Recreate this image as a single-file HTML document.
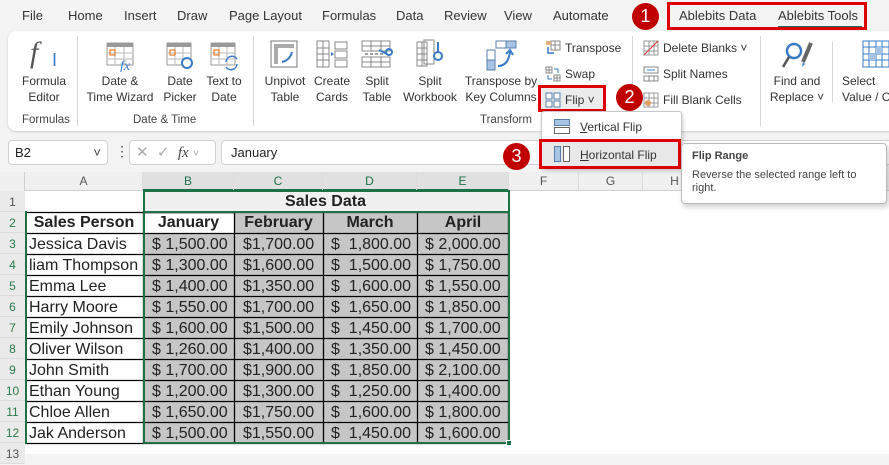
<!DOCTYPE html>
<html><head><meta charset="utf-8"><style>
*{margin:0;padding:0;box-sizing:border-box}
body{width:889px;height:454px;overflow:hidden;background:#f3f3f3;font-family:"Liberation Sans",Arial,sans-serif;position:relative;color:#222}
.a{position:absolute}
.t{font-size:13px;color:#333;top:8px}
.rl{font-size:12px;color:#333;text-align:center;line-height:16px}
.gl{font-size:11.5px;color:#444;top:114px}
.sep{width:1px;background:#d6d6d6}
.sm{font-size:12px;color:#333}
.c{position:absolute;font-size:16px;line-height:21px;height:21px;white-space:nowrap;overflow:hidden}
.ch{position:absolute;top:172px;height:19px;font-size:12px;color:#555;text-align:center;line-height:19px;border-right:1px solid #dcdcdc}
.rh{position:absolute;left:0;width:25px;font-size:12px;color:#2a7a4a;text-align:center;height:21px;line-height:22px;background:#eaeaea;border-bottom:1px solid #dcdcdc}
.circ{position:absolute;width:27px;height:27px;border-radius:50%;background:#c00000;color:#fff;font-size:18px;text-align:center;line-height:27px}
</style></head><body>
<!-- tabs -->
<div class="a t" style="left:22px">File</div>
<div class="a t" style="left:68px">Home</div>
<div class="a t" style="left:124px">Insert</div>
<div class="a t" style="left:177px">Draw</div>
<div class="a t" style="left:229px">Page Layout</div>
<div class="a t" style="left:322px">Formulas</div>
<div class="a t" style="left:396px">Data</div>
<div class="a t" style="left:444px">Review</div>
<div class="a t" style="left:504px">View</div>
<div class="a t" style="left:553px">Automate</div>
<div class="a t" style="left:679px">Ablebits Data</div>
<div class="a t" style="left:778px">Ablebits Tools</div>
<div class="a" style="left:778px;top:26px;width:84px;height:2px;background:#1e7145"></div>
<div class="a" style="left:667px;top:2px;width:200px;height:28px;border:3px solid #d00"></div>
<div class="circ" style="left:632px;top:3px">1</div>
<!-- ribbon -->
<div class="a" style="left:8px;top:31px;width:900px;height:100px;background:#fff;border-radius:8px;box-shadow:0 1px 2px #ccc"></div>
<div class="a sep" style="left:77px;top:36px;height:90px"></div>
<div class="a sep" style="left:253px;top:36px;height:90px"></div>
<div class="a sep" style="left:632px;top:36px;height:90px"></div>
<div class="a sep" style="left:760px;top:36px;height:90px"></div>
<div class="a sep" style="left:832px;top:42px;height:60px"></div>
<!-- icons -->
<div class="a" style="left:30px;top:36px;font-family:'Liberation Serif',serif;font-style:italic;font-size:30px;color:#555">f</div>
<div class="a" style="left:52px;top:50px;font-size:18px;color:#3a7bc8">I</div>
<svg class="a" style="left:106px;top:42px" width="30" height="30"><rect x="1" y="1" width="26" height="22" fill="none" stroke="#999"/><rect x="1" y="1" width="26" height="4" fill="#999"/><path d="M1 11H27M1 17H27M9 5V23M18 5V23" stroke="#bbb"/><rect x="4" y="8" width="5" height="5" fill="none" stroke="#e06000"/><text x="14" y="28" font-size="14" font-style="italic" fill="#3a7bc8" font-family="Liberation Serif">fx</text></svg>
<svg class="a" style="left:166px;top:42px" width="30" height="30"><rect x="1" y="1" width="24" height="22" fill="none" stroke="#999"/><rect x="1" y="1" width="24" height="4" fill="#999"/><path d="M1 11H25M1 17H25M9 5V23M17 5V23" stroke="#bbb"/><rect x="4" y="8" width="5" height="5" fill="none" stroke="#e06000"/><circle cx="21" cy="21" r="5" fill="#fff" stroke="#3a7bc8" stroke-width="2"/></svg>
<svg class="a" style="left:210px;top:42px" width="30" height="30"><rect x="1" y="1" width="24" height="22" fill="none" stroke="#999"/><rect x="1" y="1" width="24" height="4" fill="#999"/><path d="M1 11H25M1 17H25M9 5V23M17 5V23" stroke="#bbb"/><rect x="4" y="8" width="5" height="5" fill="none" stroke="#e06000"/><path d="M16 20a6 6 0 0 1 11 -3M27 22a6 6 0 0 1 -11 3" fill="none" stroke="#3a7bc8" stroke-width="1.5"/></svg>
<svg class="a" style="left:270px;top:40px" width="30" height="30"><rect x="1" y="1" width="26" height="26" fill="none" stroke="#777"/><rect x="4" y="4" width="20" height="4" fill="#aaa"/><rect x="4" y="8" width="4" height="16" fill="#aaa"/><path d="M12 22 Q20 20 22 12" fill="none" stroke="#3a7bc8" stroke-width="2"/></svg>
<svg class="a" style="left:316px;top:40px" width="32" height="30"><path d="M1 1h12v26H1zM1 8h12M1 14h12M1 20h12M7 1v26M19 2h12v7H19zM19 11h12v7H19zM19 20h12v7H19z" fill="none" stroke="#888"/><path d="M15 12l3 2-3 2z" fill="#3a7bc8"/></svg>
<svg class="a" style="left:361px;top:40px" width="32" height="30"><path d="M1 1h28v10H1zM1 6h28M10 1v10M20 1v10M1 17h28v10H1zM1 22h28M10 17v10M20 17v10" fill="none" stroke="#888"/><path d="M4 14h20" stroke="#444" stroke-dasharray="3 2"/><circle cx="28" cy="12" r="3" fill="none" stroke="#3a7bc8" stroke-width="2"/><path d="M18 10l8 4" stroke="#3a7bc8" stroke-width="2"/></svg>
<svg class="a" style="left:416px;top:38px" width="30" height="32"><path d="M1 4h10v24H1zM1 10h10M1 16h10M1 22h10M6 4v24M8 2h10v24H8z" fill="none" stroke="#888"/><path d="M22 4v10" stroke="#3a7bc8" stroke-width="2"/><circle cx="22" cy="18" r="4" fill="none" stroke="#3a7bc8" stroke-width="2"/></svg>
<svg class="a" style="left:486px;top:40px" width="32" height="32"><path d="M10 1h10v7H10zM20 1h10v7H20zM1 10h8v10H1zM1 20h8v10H1z" fill="#fff" stroke="#5a7fa8"/><rect x="20.5" y="1.5" width="9" height="6" fill="#a8c4e4"/><rect x="1.5" y="20.5" width="7" height="9" fill="#a8c4e4"/><path d="M12 26 Q22 26 24 12" fill="none" stroke="#3a7bc8" stroke-width="2"/><path d="M20 14l4-4 3 5" fill="none" stroke="#3a7bc8" stroke-width="2"/></svg>
<svg class="a" style="left:781px;top:40px" width="34" height="34"><circle cx="13" cy="11" r="7" fill="none" stroke="#3a7bc8" stroke-width="2.5"/><path d="M8 17L2 27" stroke="#555" stroke-width="2.5"/><path d="M30 3L22 22" stroke="#666" stroke-width="4"/><path d="M22 22l-1 5 3-3z" fill="#3a7bc8"/></svg>
<svg class="a" style="left:862px;top:40px" width="30" height="30"><path d="M1 1h26v26H1zM1 7h26M1 14h26M1 20h26M7 1v26M14 1v26M20 1v26" fill="#fff" stroke="#3a7bc8"/><rect x="14" y="7" width="6" height="7" fill="#a8c4e4"/><rect x="7" y="14" width="7" height="6" fill="#a8c4e4"/></svg>
<!-- labels -->
<div class="a rl" style="left:14px;top:73px;width:60px">Formula<br>Editor</div>
<div class="a rl" style="left:84px;top:73px;width:72px">Date &amp;<br>Time Wizard</div>
<div class="a rl" style="left:158px;top:73px;width:44px">Date<br>Picker</div>
<div class="a rl" style="left:202px;top:73px;width:44px">Text to<br>Date</div>
<div class="a rl" style="left:259px;top:73px;width:52px">Unpivot<br>Table</div>
<div class="a rl" style="left:309px;top:73px;width:46px">Create<br>Cards</div>
<div class="a rl" style="left:355px;top:73px;width:44px">Split<br>Table</div>
<div class="a rl" style="left:400px;top:73px;width:60px">Split<br>Workbook</div>
<div class="a rl" style="left:462px;top:73px;width:78px">Transpose by<br>Key Columns</div>
<div class="a rl" style="left:765px;top:73px;width:64px">Find and<br>Replace ˅</div>
<div class="a rl" style="left:838px;top:73px;width:70px;text-align:left;padding-left:4px">Select<br>Value / C</div>
<div class="a gl" style="left:22px">Formulas</div>
<div class="a gl" style="left:133px">Date &amp; Time</div>
<div class="a gl" style="left:480px">Transform</div>
<!-- small buttons -->
<svg class="a" style="left:545px;top:40px" width="16" height="16"><path d="M6 1h9v9H6zM6 5h9M10 1v9" fill="none" stroke="#888"/><rect x="1" y="1" width="5" height="4" fill="#e0b080"/><path d="M3 7v6h6" fill="none" stroke="#3a7bc8" stroke-width="1.5"/></svg>
<div class="a sm" style="left:565px;top:41px">Transpose</div>
<svg class="a" style="left:545px;top:66px" width="16" height="16"><path d="M1 1h6v6H1zM9 9h6v6H9zM1 4h6M4 1v6M9 12h6M12 9v6" fill="none" stroke="#888"/><path d="M9 3h4v4M7 13H3V9" fill="none" stroke="#3a7bc8"/></svg>
<div class="a sm" style="left:565px;top:67px">Swap</div>
<div class="a" style="left:538px;top:85px;width:68px;height:27px;border:3px solid #d00;background:#ececec"></div>
<svg class="a" style="left:545px;top:92px" width="16" height="16"><path d="M1 1h6v6H1zM9 1h6v6H9zM1 9h6v6H1zM9 9h6v6H9z" fill="#fff" stroke="#5a7fa8"/></svg>
<div class="a sm" style="left:565px;top:93px">Flip ˅</div>
<div class="circ" style="left:616px;top:84px">2</div>
<svg class="a" style="left:643px;top:40px" width="16" height="16"><path d="M1 1h14v14H1zM1 6h14M1 11h14M6 1v14M11 1v14" fill="none" stroke="#999"/><path d="M1 15L15 1" stroke="#d33"/></svg>
<div class="a sm" style="left:663px;top:41px">Delete Blanks ˅</div>
<svg class="a" style="left:643px;top:66px" width="16" height="16"><path d="M1 1h14v6H1zM1 10h14v5H1zM6 10v5M11 10v5" fill="none" stroke="#888"/><path d="M4 4h8" stroke="#3a7bc8"/></svg>
<div class="a sm" style="left:663px;top:67px">Split Names</div>
<svg class="a" style="left:643px;top:92px" width="16" height="16"><path d="M1 1h14v14H1zM1 6h14M1 11h14M6 1v14M11 1v14" fill="none" stroke="#999"/><circle cx="5" cy="11" r="3" fill="#e0a060"/></svg>
<div class="a sm" style="left:663px;top:93px">Fill Blank Cells</div>
<!-- formula bar -->
<div class="a" style="left:8px;top:140px;width:100px;height:25px;background:#fff;border:1px solid #d0d0d0;border-radius:4px;font-size:13px;line-height:23px;padding-left:6px">B2<span style="position:absolute;right:6px;color:#444">˅</span></div>
<div class="a" style="left:115px;top:143px;font-size:14px;color:#444">⋮</div>
<div class="a" style="left:129px;top:140px;width:87px;height:25px;background:#fff;border:1px solid #d0d0d0;border-radius:4px;font-size:15px;line-height:23px;color:#aaa;padding-left:6px">✕&nbsp;&nbsp;✓&nbsp;&nbsp;<i style="font-family:'Liberation Serif',serif;color:#444">fx</i> <span style="font-size:11px">˅</span></div>
<div class="a" style="left:221px;top:140px;width:680px;height:25px;background:#fff;border:1px solid #d0d0d0;border-radius:4px;font-size:13px;line-height:23px;padding-left:9px">January</div>
<!-- sheet -->
<div class="a" style="left:0;top:172px;width:889px;height:282px;background:#fff"></div>
<div class="a" style="left:0;top:172px;width:889px;height:19px;background:#f0f0f0;border-bottom:1px solid #cfcfcf"></div>
<div class="a" style="left:0;top:172px;width:25px;height:282px;background:#f0f0f0;border-right:1px solid #cfcfcf"></div>
<div class="a" style="left:143px;top:172px;width:366px;height:19px;background:#e0e0e0;border-bottom:2px solid #1e7145"></div>
<div class="ch" style="left:25px;width:118px">A</div>
<div class="ch" style="left:143px;width:91px;color:#1e7145">B</div>
<div class="ch" style="left:234px;width:89px;color:#1e7145">C</div>
<div class="ch" style="left:323px;width:94px;color:#1e7145">D</div>
<div class="ch" style="left:417px;width:92px;color:#1e7145">E</div>
<div class="ch" style="left:509px;width:70px">F</div>
<div class="ch" style="left:579px;width:64px">G</div>
<div class="ch" style="left:643px;width:64px">H</div>
<div class="rh" style="top:191px;color:#555">1</div>
<div class="rh" style="top:212px">2</div><div class="rh" style="top:233px">3</div><div class="rh" style="top:254px">4</div><div class="rh" style="top:275px">5</div><div class="rh" style="top:296px">6</div><div class="rh" style="top:317px">7</div><div class="rh" style="top:338px">8</div><div class="rh" style="top:359px">9</div><div class="rh" style="top:380px">10</div><div class="rh" style="top:401px">11</div><div class="rh" style="top:422px">12</div>
<div class="rh" style="top:443px;color:#555">13</div>
<!-- B1 merged -->
<div class="c" style="left:143px;top:191px;width:366px;background:#f0f0f0;font-weight:bold;text-align:center;border-right:1px solid #000">Sales Data</div>
<!-- data grid -->
<div class="a" style="left:25px;top:212px;width:484px;height:232px;background:#fff"></div>
<div class="a" style="left:143px;top:212px;width:366px;height:232px;background:#c6c6c6"></div>
<div class="a" style="left:145px;top:214px;width:89px;height:19px;background:#fff"></div>
<svg class="a" style="left:25px;top:211px" width="486" height="235"><g stroke="#000" stroke-width="1.3" fill="none">
<path d="M0 1.5H484M0 22.5H484M0 43.5H484M0 64.5H484M0 85.5H484M0 106.5H484M0 127.5H484M0 148.5H484M0 169.5H484M0 190.5H484M0 211.5H484M0 232.5H484"/>
<path d="M118.5 0V233M209.5 1V233M298.5 1V233M392.5 1V233M483.5 0V233"/>
</g></svg>
<div class="a" style="left:25px;top:211px;width:2px;height:233px;background:#1e7145"></div>
<div class="a" style="left:143px;top:190px;width:367px;height:254px;border:2px solid #1e7145"></div>
<div class="a" style="left:143px;top:211px;width:367px;height:2px;background:#1e7145"></div>
<div class="a" style="left:506px;top:440px;width:6px;height:6px;background:#1e7145;border:1px solid #fff"></div>
<div class="c" style="left:25px;top:212px;width:118px;text-align:center;font-weight:bold">Sales Person</div>
<div class="c" style="left:143px;top:212px;width:91px;text-align:center;font-weight:bold">January</div>
<div class="c" style="left:234px;top:212px;width:89px;text-align:center;font-weight:bold">February</div>
<div class="c" style="left:323px;top:212px;width:94px;text-align:center;font-weight:bold">March</div>
<div class="c" style="left:417px;top:212px;width:92px;text-align:center;font-weight:bold">April</div>
<div class="a" style="left:29px;top:234px;font-size:16px;line-height:21px;white-space:nowrap">Jessica Davis<br>liam Thompson<br>Emma Lee<br>Harry Moore<br>Emily Johnson<br>Oliver Wilson<br>John Smith<br>Ethan Young<br>Chloe Allen<br>Jak Anderson</div>
<div class="a" style="left:152px;top:234px;font-size:16px;line-height:21px">$ 1,500.00<br>$ 1,300.00<br>$ 1,400.00<br>$ 1,550.00<br>$ 1,600.00<br>$ 1,260.00<br>$ 1,700.00<br>$ 1,200.00<br>$ 1,650.00<br>$ 1,500.00</div>
<div class="a" style="left:243px;top:234px;font-size:16px;line-height:21px">$1,700.00<br>$1,600.00<br>$1,350.00<br>$1,700.00<br>$1,500.00<br>$1,400.00<br>$1,900.00<br>$1,300.00<br>$1,750.00<br>$1,550.00</div>
<div class="a" style="left:331px;top:234px;font-size:16px;line-height:21px">$&nbsp; 1,800.00<br>$&nbsp; 1,500.00<br>$&nbsp; 1,600.00<br>$&nbsp; 1,650.00<br>$&nbsp; 1,450.00<br>$&nbsp; 1,350.00<br>$&nbsp; 1,850.00<br>$&nbsp; 1,250.00<br>$&nbsp; 1,600.00<br>$&nbsp; 1,450.00</div>
<div class="a" style="left:425px;top:234px;font-size:16px;line-height:21px">$ 2,000.00<br>$ 1,750.00<br>$ 1,550.00<br>$ 1,850.00<br>$ 1,700.00<br>$ 1,450.00<br>$ 2,100.00<br>$ 1,400.00<br>$ 1,800.00<br>$ 1,600.00</div>
<!-- dropdown -->
<div class="a" style="left:541px;top:111px;width:141px;height:58px;background:#fff;border:1px solid #c8c8c8;border-radius:3px;box-shadow:1px 2px 4px rgba(0,0,0,.2)"></div>
<svg class="a" style="left:554px;top:118px" width="16" height="16"><rect x="0.5" y="1.5" width="15" height="6" fill="#a8c4e4" stroke="#5a7fa8"/><rect x="0.5" y="9.5" width="15" height="6" fill="#fff" stroke="#666"/></svg>
<div class="a sm" style="left:580px;top:120px"><u>V</u>ertical Flip</div>
<div class="a" style="left:539px;top:139px;width:142px;height:30px;border:3px solid #d00;background:#e8e8e8"></div>
<svg class="a" style="left:554px;top:146px" width="16" height="16"><rect x="0.5" y="0.5" width="6" height="15" fill="#a8c4e4" stroke="#5a7fa8"/><rect x="9.5" y="0.5" width="6" height="15" fill="#fff" stroke="#666"/></svg>
<div class="a sm" style="left:580px;top:148px"><u>H</u>orizontal Flip</div>
<div class="circ" style="left:503px;top:143px">3</div>
<!-- tooltip -->
<div class="a" style="left:681px;top:143px;width:206px;height:61px;background:#fff;border:1px solid #bbb;border-radius:4px;box-shadow:2px 3px 6px rgba(0,0,0,.2);padding:6px 10px;font-size:11px;color:#444;line-height:13px"><b style="display:block;margin-bottom:6px">Flip Range</b>Reverse the selected range left to right.</div>
</body></html>
